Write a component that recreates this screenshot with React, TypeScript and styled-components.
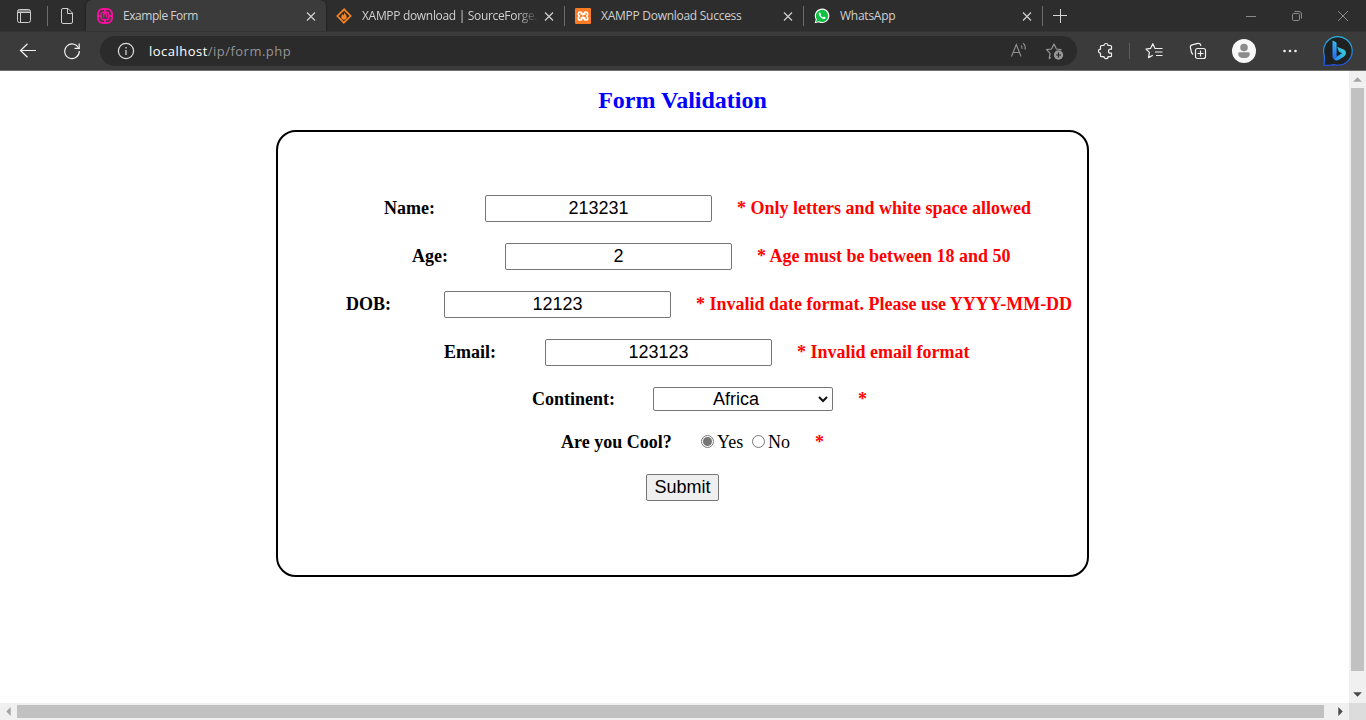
import React from "react";
import styled, { createGlobalStyle, css } from "styled-components";

const GlobalStyle = createGlobalStyle`
  * { box-sizing: border-box; }
  body { margin: 0; background: #fff; overflow: hidden; }
`;

const uiFont = css`
  font-family: "Open Sans", "Noto Sans", sans-serif;
`;

const Window = styled.div`
  display: flex;
  flex-direction: column;
  width: 1366px;
  height: 720px;
  overflow: hidden;
`;

/* ---------- tab strip ---------- */

const TabStrip = styled.div`
  ${uiFont}
  display: flex;
  align-items: center;
  height: 32px;
  background: #2d2d2d;
  border-bottom: 1px solid #343434;
  color: #d0d0d0;
`;

const StripSlot = styled.div<{ $w: number }>`
  flex: none;
  display: flex;
  align-items: center;
  justify-content: center;
  width: ${(p) => p.$w}px;
  height: 32px;
`;

const StripDivider = styled.div`
  flex: none;
  width: 1px;
  height: 20px;
  background: #6b6b6b;
`;

const Tab = styled.div<{ $active?: boolean }>`
  flex: none;
  display: flex;
  align-items: center;
  width: ${(p) => (p.$active ? 240 : 238)}px;
  height: 32px;
  padding: 0 10px 0 ${(p) => (p.$active ? 11 : 10)}px;
  border-radius: 6px 6px 0 0;
  background: ${(p) => (p.$active ? "#3b3b3b" : "transparent")};
  box-shadow: ${(p) => (p.$active ? "0 0 3px rgba(0,0,0,.45)" : "none")};
  clip-path: inset(0 -4px 0 -4px);
`;

const Favicon = styled.span`
  flex: none;
  display: flex;
  align-items: center;
  justify-content: center;
  width: 16px;
  height: 18px;
`;

const TabTitle = styled.span<{ $spacing: number; $fade?: boolean }>`
  flex: 1;
  min-width: 0;
  margin-left: 10px;
  margin-right: 7px;
  white-space: nowrap;
  font-size: 12px;
  line-height: 18px;
  letter-spacing: ${(p) => p.$spacing}px;
  ${(p) =>
    p.$fade &&
    css`
      mask-image: linear-gradient(to right, #000 155px, transparent 177px);
    `}
`;

const Spacer = styled.div`
  flex: 1;
`;

/* ---------- toolbar ---------- */

const Toolbar = styled.div`
  ${uiFont}
  display: flex;
  align-items: center;
  height: 39px;
  padding-left: 6px;
  background: #3b3b3b;
  border-bottom: 1px solid #6e6e6e;
`;

const ToolSlot = styled.div<{ $w?: number }>`
  flex: none;
  display: flex;
  align-items: center;
  justify-content: center;
  width: ${(p) => p.$w ?? 44}px;
  height: 38px;
`;

const AddressBar = styled.div`
  display: flex;
  align-items: center;
  width: 977px;
  height: 30px;
  margin: 0 6px;
  padding: 0 4px 0 17px;
  border-radius: 15px;
  background: #2b2b2b;
`;

const Url = styled.span`
  flex: 1;
  margin-left: 14px;
  font-size: 13px;
  line-height: 20px;
  letter-spacing: 0.48px;
  color: #949494;
`;

const Host = styled.span`
  color: #fff;
`;

const ToolDivider = styled.div`
  width: 1px;
  height: 16px;
  background: #5c5c5c;
`;

/* ---------- page viewport and scrollbars ---------- */

const Viewport = styled.div`
  display: grid;
  grid-template-columns: 1349px 17px;
  grid-template-rows: 632px 17px;
  height: 649px;
`;

const Page = styled.main`
  overflow: hidden;
  padding-left: 276px;
  background: #fff;
  font-family: "Liberation Serif", "Times New Roman", serif;
  font-size: 18px;
  color: #000;
`;

const ScrollTrack = styled.div<{ $horizontal?: boolean }>`
  display: flex;
  flex-direction: ${(p) => (p.$horizontal ? "row" : "column")};
  align-items: center;
  background: #f0f0f0;
`;

const ScrollArrow = styled.div`
  flex: none;
  display: flex;
  align-items: center;
  justify-content: center;
  width: 17px;
  height: 17px;
`;

const ScrollThumb = styled.div<{ $w: number; $h: number }>`
  width: ${(p) => p.$w}px;
  height: ${(p) => p.$h}px;
  background: #c1c1c1;
`;

const ScrollCorner = styled.div`
  background: #dcdcdc;
`;

/* ---------- form ---------- */

const Heading = styled.h2`
  width: 813px;
  margin: 0;
  padding-top: 15px;
  height: 59px;
  text-align: center;
  font-size: 24px;
  line-height: 28px;
  color: #0000ff;
`;

const Card = styled.form`
  width: 813px;
  height: 447px;
  padding-top: 63px;
  border: 2px solid #000;
  border-radius: 20px;
`;

const Row = styled.div<{ $indent: number; $h?: number; $gap?: number }>`
  display: flex;
  align-items: center;
  height: ${(p) => p.$h ?? 27}px;
  margin-bottom: ${(p) => p.$gap ?? 21}px;
  padding-left: ${(p) => p.$indent}px;
  white-space: nowrap;
`;

const Label = styled.label<{ $w: number; $lift?: boolean }>`
  flex: none;
  width: ${(p) => p.$w}px;
  padding-bottom: ${(p) => (p.$lift ? 1 : 0)}px;
  font-weight: bold;
  line-height: 20px;
`;

const controlFont = css`
  font-family: "Liberation Sans", Arial, sans-serif;
  font-size: 18px;
  color: #000;
`;

const TextInput = styled.input`
  ${controlFont}
  flex: none;
  width: 227px;
  height: 27px;
  padding: 1px 2px;
  border: 1px solid #767676;
  border-radius: 2px;
  background: #fff;
  text-align: center;
  outline: none;
`;

const SelectBox = styled.div`
  ${controlFont}
  flex: none;
  display: flex;
  align-items: center;
  width: 180px;
  height: 24px;
  padding-right: 4px;
  border: 1px solid #767676;
  border-radius: 2px;
  line-height: 20px;
`;

const SelectValue = styled.span`
  flex: 1;
  padding-bottom: 1px;
  text-align: center;
`;

const ErrorText = styled.span<{ $lift?: boolean }>`
  margin-left: 25px;
  padding-bottom: ${(p) => (p.$lift ? 1 : 0)}px;
  font-weight: bold;
  line-height: 20px;
  color: #ff0000;
`;

const Radio = styled.span<{ $checked?: boolean }>`
  flex: none;
  display: flex;
  align-items: center;
  justify-content: center;
  width: 13px;
  height: 13px;
  margin: 0 3px 1px 0;
  border: 1px solid #767676;
  border-radius: 50%;
  &::before {
    content: "";
    width: 9px;
    height: 9px;
    border-radius: 50%;
    background: ${(p) => (p.$checked ? "#767676" : "transparent")};
  }
`;

const Option = styled.span<{ $w: number }>`
  flex: none;
  width: ${(p) => p.$w}px;
  line-height: 20px;
`;

const Submit = styled.button`
  ${controlFont}
  width: 73px;
  height: 27px;
  padding: 0 0 1px;
  border: 1px solid #767676;
  border-radius: 2px;
  background: #efefef;
  line-height: 20px;
`;

/* ---------- icons ---------- */

const CloseX = () => (
  <svg width="10" height="10" viewBox="0 0 10 10" stroke="#d0d0d0" strokeWidth="1.2">
    <path d="M1 1.5l8 8M9 1.5l-8 8" />
  </svg>
);

const TabActionsIcon = () => (
  <svg width="16" height="16" viewBox="0 0 16 16" fill="none" stroke="#cfcfcf">
    <rect x="1.5" y="1.5" width="13" height="13" rx="2" />
    <path d="M2 3h12M2 4.5h12" />
    <path d="M4.5 5v9.5" />
  </svg>
);

const PageIcon = () => (
  <svg width="14" height="18" viewBox="0 0 14 18" fill="none" stroke="#cfcfcf">
    <path d="M3 1.5h5l4.5 4.5v9a1.5 1.5 0 0 1-1.5 1.5H3A1.5 1.5 0 0 1 1.5 15V3A1.5 1.5 0 0 1 3 1.5z" />
    <path d="M7.5 1.5V6.500h5" />
  </svg>
);

const WampIcon = () => (
  <svg width="16" height="16" viewBox="0 0 16 16" fill="none">
    <rect x="1" y="1" width="14" height="14" rx="5" stroke="#f5109b" strokeWidth="2" />
    <rect x="3.500" y="3.500" width="9" height="9" rx="2.500" fill="#f5109b" />
    <path d="M7 1h2v3H7zM7 12h2v3H7zM1 7h3v2H1zM12 7h3v2h-3z" fill="#f5109b" />
    <path d="M5.500 5.300v3.500q0 1.500 1.200 1.500T8 8.800V6.500v2.300q0 1.500 1.300 1.500t1.200-1.500V5.300" stroke="#3b3b3b" strokeWidth="1.300" />
  </svg>
);

const SourceForgeIcon = () => (
  <svg width="16" height="16" viewBox="0 0 16 16" fill="none">
    <path d="M6.800 13.600L1.300 8 8.200 1.300l1.500 1.500M9.200 2.400L14.700 8 7.800 14.700l-1.500-1.500" stroke="#f58220" strokeWidth="1.700" />
    <path d="M8.200 4c.2 1.800 2.500 2.700 2.500 5a2.700 2.700 0 0 1-5.400 0c0-1.500.8-2.200 1.200-3 .3.600.5 1 .7 1.400.8-.9 1.200-2 1-3.400z" fill="#f58220" />
  </svg>
);

const XamppIcon = () => (
  <svg width="16" height="16" viewBox="0 0 16 16" fill="none">
    <rect width="16" height="16" rx="1" fill="#fb7a24" />
    <path
      d="M5.500 6h5M5.500 10h5M8 6v4"
      stroke="#fff"
      strokeWidth="1.600"
    />
    <path
      d="M6.800 6.600V5.500Q6.800 4 5.200 4T3.300 5.700Q3.300 7 4.300 8 3.300 9 3.300 10.400 3.300 12 5.100 12T6.800 10.500V9.400M9.200 6.600V5.500Q9.200 4 10.800 4T12.700 5.700Q12.700 7 11.700 8 12.700 9 12.700 10.400 12.700 12 10.900 12T9.200 10.500V9.400"
      stroke="#fff"
      strokeWidth="1.700"
    />
    <path d="M7.300 7.300h1.400v1.400H7.300z" fill="#fb7a24" />
  </svg>
);

const WhatsAppIcon = () => (
  <svg width="18" height="18" viewBox="0 0 18 18">
    <path d="M.8 17.200l1.200-4.300A8.200 8.200 0 1 1 5.200 16z" fill="#fff" />
    <path d="M2.300 15.700l.9-3a6.900 6.900 0 1 1 2.300 2.200z" fill="#10c045" />
    <path d="M6.500 4.800c-.7.300-1.300 1.100-1.100 2.200.4 2.400 3.200 5.100 5.600 5.400 1.200.1 2.100-.7 2.100-1.700l-2-1-.9 1c-1.300-.4-2.400-1.500-2.900-2.700l.7-.9z" fill="#fff" />
  </svg>
);

const PlusIcon = () => (
  <svg width="16" height="16" viewBox="0 0 16 16" stroke="#d6d6d6">
    <path d="M0 7.500h14M7.500 1v14" />
  </svg>
);

const MinimizeIcon = () => (
  <svg width="10" height="10" viewBox="0 0 10 10" stroke="#8a8a8a">
    <path d="M0 5.500h10" />
  </svg>
);

const RestoreIcon = () => (
  <svg width="10" height="10" viewBox="0 0 10 10" fill="none" stroke="#8a8a8a">
    <rect x="0.500" y="2.500" width="7" height="7" rx="1.200" />
    <path d="M2.500.5H7A2.500 2.500 0 0 1 9.500 3v4.500" />
  </svg>
);

const WindowCloseIcon = () => (
  <svg width="10" height="10" viewBox="0 0 10 10" stroke="#8a8a8a">
    <path d="M0 0l10 10M10 0L0 10" />
  </svg>
);

const BackIcon = () => (
  <svg width="18" height="16" viewBox="0 0 18 16" fill="none" stroke="#f2f2f2" strokeWidth="1.200">
    <path d="M17 7.500H1.500M8.500.8L1.500 7.500l7 6.700" />
  </svg>
);

const RefreshIcon = () => (
  <svg width="18" height="18" viewBox="0 0 18 18" fill="none" stroke="#f2f2f2" strokeWidth="1.200">
    <path d="M16 7.200A7.300 7.300 0 1 0 16.300 9" />
    <path d="M16.200 1.500V6.300H11.500" />
  </svg>
);

const InfoIcon = () => (
  <svg width="18" height="18" viewBox="0 0 18 18" fill="none" stroke="#dedede">
    <circle cx="9" cy="9" r="7.600" strokeWidth="1.200" />
    <path d="M9 8v5M9 5v1.500" strokeWidth="1.200" />
  </svg>
);

const ReadAloudIcon = () => (
  <svg width="18" height="18" viewBox="0 0 18 18" fill="none" stroke="#929292" strokeWidth="1.100">
    <path d="M1.500 14.500L6.300 2.500 11 14.500M3 10.500h6.600" />
    <path d="M11 3.300q1.400 1.200 1 3.500M13 1.300q3 2.200 2 6.200" />
  </svg>
);

const AddFavoriteIcon = () => (
  <svg width="20" height="20" viewBox="0 0 20 20" fill="none">
    <path
      d="M6 16.500l-1.800 1 .9-5.200L1.500 8.700l5-.7L9 3l2.400 5 5.100.7"
      stroke="#969696"
      strokeWidth="1.200"
      strokeLinejoin="round"
    />
    <circle cx="13.500" cy="14" r="4.700" fill="#969696" />
    <path d="M13.500 11.500v5M11 14h5" stroke="#2b2b2b" strokeWidth="1.200" />
  </svg>
);

const PuzzleIcon = () => (
  <svg width="18" height="18" viewBox="0 0 18 18" fill="none" stroke="#f0f0f0" strokeWidth="1.200" strokeLinejoin="round">
    <path d="M5.500 3.500H8a2 2 0 1 1 4 0h2.500q1 0 1 1V7.200h-1a2 2 0 1 0 0 4h1v2.500q0 1-1 1H12a2 2 0 1 1-4 0H5.500q-1 0-1-1V11.200a2 2 0 1 1 0-4V4.500q0-1 1-1z" />
  </svg>
);

const FavoritesIcon = () => (
  <svg width="18" height="18" viewBox="0 0 18 18" fill="none" stroke="#f0f0f0" strokeWidth="1.200" strokeLinejoin="round">
    <path d="M11.500 6.500H10L7.800 1.700 5.500 6.400l-4.500.7 3.400 3.300-.8 5.200 4.200-2.300" />
    <path d="M11 6.500h6.500M10 10h7.500M11 13.500h6.500" />
  </svg>
);

const CollectionsIcon = () => (
  <svg width="18" height="18" viewBox="0 0 18 18" fill="none" stroke="#f0f0f0" strokeWidth="1.200">
    <rect x="6.500" y="6.500" width="10" height="10" rx="2" />
    <path d="M11.500 8.500v6M8.500 11.500h6" />
    <path d="M4.200 12.500C3 12 2.700 11.300 2.400 10L1.400 5.500Q1 3.500 3 2.900L9 1.400q2-.4 2.600 1.400l.3 1.200" />
  </svg>
);

const AvatarIcon = () => (
  <svg width="24" height="24" viewBox="0 0 24 24">
    <circle cx="12" cy="12" r="12" fill="#f7f7f7" />
    <circle cx="12" cy="8.500" r="3.800" fill="#8c8c8c" />
    <path d="M7.700 13.300h8.600q1.500 0 1.500 1.400c0 3-2.500 4.400-5.800 4.400s-5.800-1.400-5.800-4.400q0-1.400 1.500-1.400z" fill="#8c8c8c" />
  </svg>
);

const DotsIcon = () => (
  <svg width="16" height="4" viewBox="0 0 16 4" fill="#f0f0f0">
    <circle cx="2.500" cy="2" r="1.300" />
    <circle cx="8" cy="2" r="1.300" />
    <circle cx="13.500" cy="2" r="1.300" />
  </svg>
);

const BingIcon = () => (
  <svg width="32" height="32" viewBox="0 0 32 32">
    <defs>
      <linearGradient id="ring" x1="0" y1="0" x2="0" y2="1">
        <stop offset="0" stopColor="#25b9e6" />
        <stop offset="0.550" stopColor="#208be4" />
        <stop offset="1" stopColor="#2152e0" />
      </linearGradient>
      <linearGradient id="stem" x1="0" y1="0" x2="0" y2="1">
        <stop offset="0" stopColor="#35bbf5" />
        <stop offset="1" stopColor="#2767ed" />
      </linearGradient>
      <linearGradient id="bowl" x1="1" y1="0" x2="0" y2="1">
        <stop offset="0" stopColor="#35dfd0" />
        <stop offset="1" stopColor="#2b82f3" />
      </linearGradient>
    </defs>
    <path d="M1.800 30.200Q3 26 2.200 20A14.300 14.300 0 1 1 16 30.200q-2 0-4-.6-5 1.200-10.200.6z" fill="#202020" stroke="url(#ring)" strokeWidth="1.200" />
    <path d="M15 11.700l2 5 3 1.500-8.500 5.500c1.500 1.900 3.500 2.200 5.500 1.100l4.800-3c3.200-2.200 2.700-6.300-.8-7.500z" fill="url(#bowl)" />
    <path d="M10.500 5.500l3.200 1.400q.9.500.9 1.600V22l-2 2.300q-2.100-.7-2.100-3z" fill="url(#stem)" />
  </svg>
);

const Chevron = () => (
  <svg width="10" height="8" viewBox="0 0 10 8" fill="none" stroke="#111" strokeWidth="2">
    <path d="M1 2l4 4 4-4" />
  </svg>
);

const arrows = {
  up: { d: "M5 3L9 7H1z", fill: "#a3a3a3" },
  down: { d: "M1 3h8L5 7z", fill: "#4a4a4a" },
  left: { d: "M3 5l4-4v8z", fill: "#a3a3a3" },
  right: { d: "M7 5L3 1v8z", fill: "#4a4a4a" },
};

const Arrow = ({ dir }: { dir: keyof typeof arrows }) => (
  <ScrollArrow>
    <svg width="9" height="9" viewBox="0.900 0.900 8.200 8.200">
      <path d={arrows[dir].d} fill={arrows[dir].fill} />
    </svg>
  </ScrollArrow>
);

/* ---------- data ---------- */

const fields = [
  { label: "Name:", value: "213231", indent: 106, width: 101, error: "* Only letters and white space allowed" },
  { label: "Age:", value: "2", indent: 134, width: 93, error: "* Age must be between 18 and 50" },
  { label: "DOB:", value: "12123", indent: 68, width: 98, error: "* Invalid date format. Please use YYYY-MM-DD" },
  { label: "Email:", value: "123123", indent: 166, width: 101, error: "* Invalid email format" },
];

export default function App() {
  return (
    <Window>
      <GlobalStyle />
      <TabStrip>
        <StripSlot $w={47}><TabActionsIcon /></StripSlot>
        <StripDivider />
        <StripSlot $w={38}><PageIcon /></StripSlot>
        <Tab $active>
          <Favicon><WampIcon /></Favicon>
          <TabTitle $spacing={-0.45}>Example Form</TabTitle>
          <CloseX />
        </Tab>
        <Tab>
          <Favicon><SourceForgeIcon /></Favicon>
          <TabTitle $spacing={-0.32} $fade>XAMPP download | SourceForge.</TabTitle>
          <CloseX />
        </Tab>
        <StripDivider />
        <Tab>
          <Favicon><XamppIcon /></Favicon>
          <TabTitle $spacing={-0.27}>XAMPP Download Success</TabTitle>
          <CloseX />
        </Tab>
        <StripDivider />
        <Tab>
          <Favicon><WhatsAppIcon /></Favicon>
          <TabTitle $spacing={-0.25}>WhatsApp</TabTitle>
          <CloseX />
        </Tab>
        <StripDivider />
        <StripSlot $w={35}><PlusIcon /></StripSlot>
        <Spacer />
        <StripSlot $w={46}><MinimizeIcon /></StripSlot>
        <StripSlot $w={46}><RestoreIcon /></StripSlot>
        <StripSlot $w={46}><WindowCloseIcon /></StripSlot>
      </TabStrip>
      <Toolbar>
        <ToolSlot><BackIcon /></ToolSlot>
        <ToolSlot><RefreshIcon /></ToolSlot>
        <AddressBar>
          <InfoIcon />
          <Url><Host>localhost</Host>/ip/form.php</Url>
          <ToolSlot $w={37}><ReadAloudIcon /></ToolSlot>
          <ToolSlot $w={36}><AddFavoriteIcon /></ToolSlot>
        </AddressBar>
        <ToolSlot><PuzzleIcon /></ToolSlot>
        <ToolSlot $w={5}><ToolDivider /></ToolSlot>
        <ToolSlot><FavoritesIcon /></ToolSlot>
        <ToolSlot><CollectionsIcon /></ToolSlot>
        <ToolSlot $w={48}><AvatarIcon /></ToolSlot>
        <ToolSlot><DotsIcon /></ToolSlot>
        <ToolSlot $w={52}><BingIcon /></ToolSlot>
      </Toolbar>
      <Viewport>
        <Page>
          <Heading>Form Validation</Heading>
          <Card>
            {fields.map((f) => (
              <Row key={f.label} $indent={f.indent}>
                <Label $w={f.width} $lift>{f.label}</Label>
                <TextInput defaultValue={f.value} />
                <ErrorText $lift>{f.error}</ErrorText>
              </Row>
            ))}
            <Row $indent={254} $h={24} $gap={20}>
              <Label $w={121}>Continent:</Label>
              <SelectBox>
                <SelectValue>Africa</SelectValue>
                <Chevron />
              </SelectBox>
              <ErrorText>*</ErrorText>
            </Row>
            <Row $indent={283} $h={22} $gap={21}>
              <Label $w={140}>Are you Cool?</Label>
              <Radio $checked />
              <Option $w={35}>Yes</Option>
              <Radio />
              <Option $w={22}>No</Option>
              <ErrorText>*</ErrorText>
            </Row>
            <Row $indent={368}>
              <Submit type="button">Submit</Submit>
            </Row>
          </Card>
        </Page>
        <ScrollTrack>
          <Arrow dir="up" />
          <ScrollThumb $w={13} $h={583} />
          <Spacer />
          <Arrow dir="down" />
        </ScrollTrack>
        <ScrollTrack $horizontal>
          <Arrow dir="left" />
          <ScrollThumb $w={1307} $h={13} />
          <Spacer />
          <Arrow dir="right" />
        </ScrollTrack>
        <ScrollCorner />
      </Viewport>
    </Window>
  );
}
